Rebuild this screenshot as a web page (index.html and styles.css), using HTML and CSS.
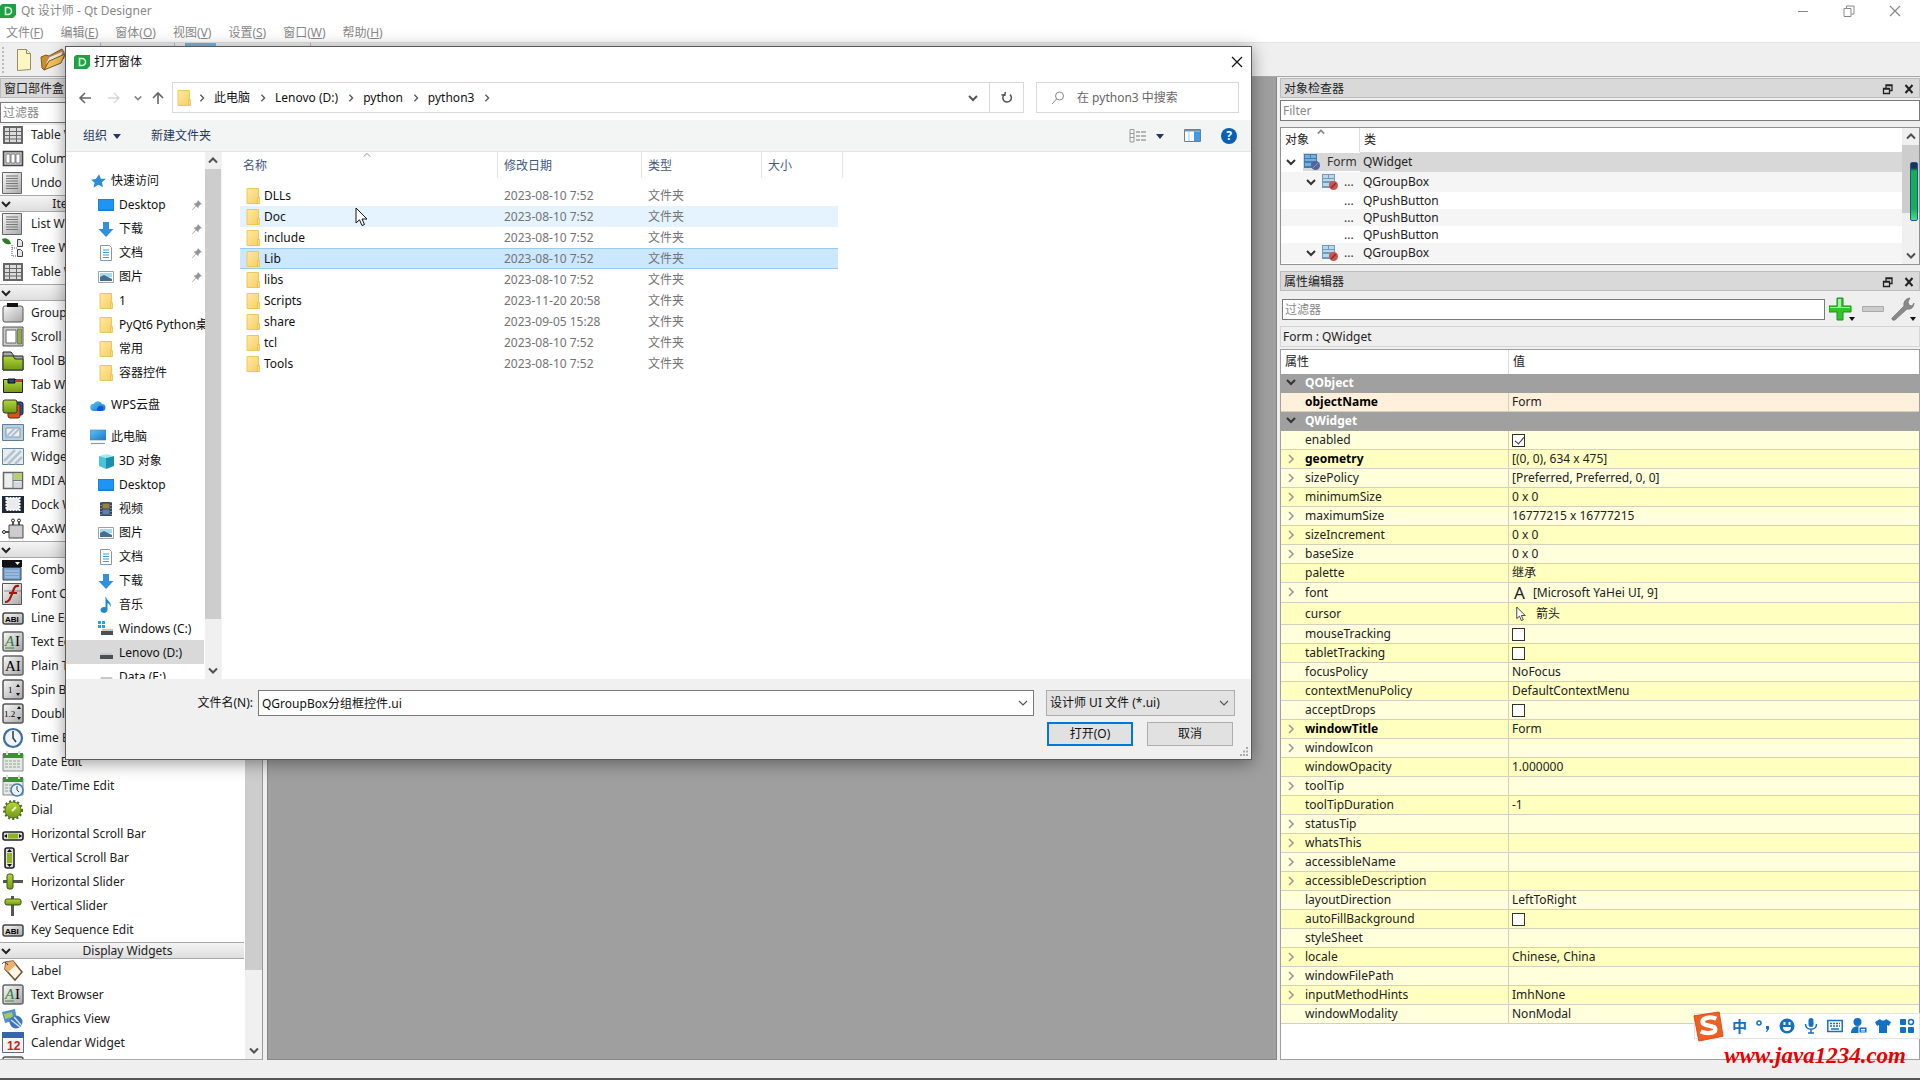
FILE: index.html
```html
<!DOCTYPE html>
<html lang="zh-CN">
<head>
<meta charset="utf-8">
<title>Qt 设计师 - Qt Designer</title>
<link rel="stylesheet" href="styles.css">
</head>
<body>
<svg class="defs" aria-hidden="true">
<defs>
<linearGradient id="gGrey" x1="0" y1="0" x2="1" y2="1"><stop offset="0" stop-color="#f8f8f8"/><stop offset="1" stop-color="#a8a8a8"/></linearGradient>
<linearGradient id="gBlue" x1="0" y1="0" x2="1" y2="1"><stop offset="0" stop-color="#5cc3f7"/><stop offset="1" stop-color="#1877c9"/></linearGradient>
<linearGradient id="gGreen" x1="0" y1="0" x2="0" y2="1"><stop offset="0" stop-color="#b4d63c"/><stop offset="1" stop-color="#6f9a12"/></linearGradient>
<linearGradient id="gFolder" x1="0" y1="0" x2="1" y2="1"><stop offset="0" stop-color="#ffe9a0"/><stop offset="1" stop-color="#f7cf66"/></linearGradient>
<symbol id="down" viewBox="0 0 10 10"><path d="M1 3l4 4 4-4" fill="none" stroke="currentColor" stroke-width="2"/></symbol>
<symbol id="thin" viewBox="0 0 10 10"><path d="M1 3l4 4 4-4" fill="none" stroke="currentColor" stroke-width="1.200"/></symbol>
<symbol id="up" viewBox="0 0 10 10"><path d="M1 7l4-4 4 4" fill="none" stroke="currentColor" stroke-width="2"/></symbol>
<symbol id="right" viewBox="0 0 10 10"><path d="M3 1l4 4-4 4" fill="none" stroke="currentColor" stroke-width="1.6"/></symbol>
<symbol id="tri" viewBox="0 0 8 8"><path d="M0 2h8L4 7z" fill="currentColor"/></symbol>
<symbol id="cross" viewBox="0 0 12 12"><path d="M1 1l10 10M11 1L1 11" fill="none" stroke="currentColor" stroke-width="1.2"/></symbol>
<symbol id="crossb" viewBox="0 0 12 12"><path d="M2.500 2l7 8M9.500 2l-7 8" fill="none" stroke="currentColor" stroke-width="2"/></symbol>
<symbol id="restore" viewBox="0 0 12 12"><path d="M1 3.500h7v8H1zM3.500 3V1h7.500v8H8.500" fill="none" stroke="currentColor"/></symbol>
<symbol id="float" viewBox="0 0 12 12"><path d="M1.500 5.500h6v5h-6zM4 5V2h6v5.500H8M1 6h7M4 2.500h6" fill="none" stroke="currentColor" stroke-width="1.300"/></symbol>
<symbol id="qt" viewBox="0 0 16 16"><path d="M2 1h14v11l-3 3H0V3z" fill="#1ea043"/><path d="M5.500 4.500h2.500a3.400 3.400 0 010 7H5.500z" fill="none" stroke="#d8ffe2" stroke-width="1.600"/></symbol>
<symbol id="folder" viewBox="0 0 14 16"><path d="M1 .5h11.500v15H1z" fill="url(#gFolder)" stroke="#ecc75e"/><path d="M11.500 9.500h2v6h-2z" fill="#fbdc7c" stroke="#e5b94a" stroke-width=".7"/></symbol>
<symbol id="star" viewBox="0 0 14 14"><path d="M8 1l1.500 4L14 5l-3.600 3 1 4.500L7.500 10.300 3 13l1-4.500L1 6l4-.7z" fill="#2f8ad8"/></symbol>
<symbol id="desk" viewBox="0 0 16 16"><path d="M0 2h16v12H0z" fill="#1583e0"/><path d="M1 3h14v9H1z" fill="#1e95f2"/></symbol>
<symbol id="dl" viewBox="0 0 16 16"><path d="M5 1h6v7h4.500L8 16 .5 8H5z" fill="#2f8fe0"/></symbol>
<symbol id="doc" viewBox="0 0 16 16"><path d="M2.500.5h9l2 2v13h-11z" fill="#fff" stroke="#8b98a3"/><path d="M5 5h6M5 7.500h6M5 10h6M5 12.500h6" stroke="#3f9bd8" stroke-width="1.200"/></symbol>
<symbol id="pic" viewBox="0 0 16 16"><path d="M.5 2.500h15v11H.5z" fill="#fff" stroke="#9aa4ab"/><path d="M2 4h12v4H2z" fill="#a8d8f2"/><path d="M2 8l4-2 8 4v2H2z" fill="#41708e"/></symbol>
<symbol id="pin" viewBox="0 0 12 12"><path d="M7 0l5 5-2 .5-2 2L7.500 10 5 7.500.5 12 0 11.500 4.500 7 2 4.500 4.500 4l2-2z" fill="#8f969c"/></symbol>
<symbol id="cloud" viewBox="0 0 16 16"><path d="M4 14a3.600 3.600 0 01-.3-7.200A4.500 4.500 0 0112 7a3.500 3.500 0 010 7z" fill="url(#gBlue)"/><path d="M7 14a4 4 0 015-5 3 3 0 010 5z" fill="#0b58d2"/></symbol>
<symbol id="pc" viewBox="0 0 16 16"><path d="M0 1h16v10H0z" fill="url(#gBlue)" stroke="#3c86b5" stroke-width=".6"/><path d="M1 14.500h14" stroke="#8b9aa5" stroke-width="1.200"/></symbol>
<symbol id="cube" viewBox="0 0 16 16"><path d="M1 3l8-2 6 2-7 2z" fill="#9fe9f3"/><path d="M1 3l7 2v11l-7-3z" fill="#48c4d9"/><path d="M8 5l8-2v10l-8 3z" fill="#1a8fb5"/></symbol>
<symbol id="film" viewBox="0 0 16 16"><path d="M2 1h12v14H2z" fill="#39455f"/><path d="M4.500 2.500h7v5h-7z" fill="#96833f"/><path d="M4.500 8.500h7v5h-7z" fill="#5c81b0"/><path d="M3 1v14M13 1v14" stroke="#bac6d2" stroke-dasharray="1 2"/></symbol>
<symbol id="note" viewBox="0 0 16 16"><path d="M8 0c1 4 6 5 4.500 10-1-3-2-4-3-4v7a3.500 3 0 11-2-2.800V0z" fill="#2485cf"/></symbol>
<symbol id="win" viewBox="0 0 16 16"><path d="M0 0h3v3H0zM4 0h3v3H4zM0 4h3v3H0zM4 4h3v3H4z" fill="#25a5e8"/><path d="M4 8h11v4H3z" fill="#c5c9cb"/><path d="M3 10h12v4H3z" fill="#4a4f53"/></symbol>
<symbol id="drive" viewBox="0 0 16 16"><path d="M3 8h11l1 3H2z" fill="#c5c9cb"/><path d="M2 10h13v4H2z" fill="#4a4f53"/></symbol>
<symbol id="pointer" viewBox="0 0 13 20"><path d="M1 1v15l3.500-3.200L7 18.500l2.500-1L7 12h5z" fill="#fff" stroke="#111"/></symbol>
<symbol id="wTable" viewBox="0 0 22 22"><path d="M1 2h20v18H1z" fill="#666"/><path d="M3 4h4v3H3zM8 4h6v3H8zM15 4h4v3h-4zM3 8h4v3H3zM8 8h6v3H8zM15 8h4v3h-4zM3 12h4v2.500H3zM8 12h6v2.500H8zM15 12h4v2.500h-4zM3 15.500h4V18H3zM8 15.500h6V18H8zM15 15.500h4V18h-4z" fill="#dcdcdc"/></symbol>
<symbol id="wColumn" viewBox="0 0 22 22"><path d="M1.500 3.500h19v14h-19z" fill="#ccc" stroke="#444" stroke-width="1.600"/><path d="M4 6h4v9H4zM9 6h4v9H9zM14 6h4v9h-4z" fill="#fff" stroke="#666" stroke-width=".8"/></symbol>
<symbol id="wList" viewBox="0 0 22 22"><path d="M.5.5h19v21H.5z" fill="url(#gGrey)" stroke="#666"/><path d="M4 4h12M4 6.500h12M4 9h12M4 11.500h12M4 14h12M4 16.500h12" stroke="#777"/></symbol>
<symbol id="wTree" viewBox="0 0 22 22"><path d="M0 2c4-2 8 0 9 5C4 8 1 6 0 2z" fill="#2e7d25"/><path d="M10 8v11h5M10 11h5" stroke="#555" stroke-dasharray="1 1" fill="none"/><path d="M15.500 2.500h3l2 2v5h-5zM15.500 12.500h3l2 2v5h-5z" fill="#e4e4e4" stroke="#444"/></symbol>
<symbol id="wGroup" viewBox="0 0 22 22"><rect x="1" y="4" width="20" height="16" rx="2" fill="url(#gGrey)" stroke="#555"/><path d="M5 1h11v4H5z" fill="#111"/></symbol>
<symbol id="wScroll" viewBox="0 0 22 22"><path d="M1 1h20v19H1z" fill="#ccc" stroke="#555"/><path d="M4 4h10v13H4z" fill="#fff" stroke="#666"/><path d="M15.500 3h4v15h-4z" fill="#8fae3c" stroke="#555" stroke-width=".6"/></symbol>
<symbol id="wTool" viewBox="0 0 22 22"><path d="M1 2h8l3 4h9v14H1z" fill="#aaa" stroke="#222"/><path d="M1 6h10l2 3h8v11H1z" fill="url(#gGreen)" stroke="#233"/></symbol>
<symbol id="wTab" viewBox="0 0 22 22"><path d="M1.500 5.500h19v13h-19z" fill="url(#gGreen)" stroke="#222"/><path d="M6 5h7v4H6z" fill="#248" stroke="#111"/><path d="M14 5h6v3h-6z" fill="#c33"/></symbol>
<symbol id="wStack" viewBox="0 0 22 22"><rect x="9" y="4" width="12" height="13" rx="2" fill="#2450a0" stroke="#124"/><rect x="6" y="6" width="12" height="14" rx="2" fill="#d2571c" stroke="#621"/><rect x="1" y="2" width="14" height="13" rx="2" fill="url(#gGreen)" stroke="#333"/></symbol>
<symbol id="wFrame" viewBox="0 0 22 22"><path d="M.5 2.500h21v16H.5z" fill="#b8d0e2" stroke="#5c7d96"/><path d="M4 6h14v9H4z" fill="#f0f0ee" stroke="#7f9db5"/><path d="M5 14l8-8M9 15l8-8" stroke="#aec0cd" stroke-width="2"/></symbol>
<symbol id="wWidget" viewBox="0 0 22 22"><path d="M.5 2.500h21v16H.5z" fill="#e9ecee" stroke="#62849c"/><path d="M2 15L13 4M6 18L19 5M13 18l7-7" stroke="#b4c4cf" stroke-width="2.500"/></symbol>
<symbol id="wMdi" viewBox="0 0 22 22"><path d="M1.500 2.500h19v16h-19z" fill="#eee" stroke="#666" stroke-width="1.500"/><path d="M12 3h8v7h-8z" fill="#b5cf72"/><path d="M11 3v15M11 10.500h9" stroke="#777"/><path d="M12 12h7v5h-7z" fill="#cfdae6"/></symbol>
<symbol id="wDock" viewBox="0 0 22 22"><path d="M0 2h22v17H0z" fill="#1c2835"/><path d="M4.500 4h13v12h-13z" fill="#e8ecef" stroke="#fff" stroke-width="2" stroke-dasharray="2 1"/></symbol>
<symbol id="wQax" viewBox="0 0 22 22"><path d="M7 7h14v13H7z" fill="#ccc" stroke="#444"/><path d="M11 7V3M17 7V3M7 14H3" stroke="#222" stroke-width="1.500"/><circle cx="11" cy="2.500" r="1.500" fill="#fff" stroke="#222"/><circle cx="17" cy="2.500" r="1.500" fill="#fff" stroke="#222"/><circle cx="2" cy="14" r="1.500" fill="#fff" stroke="#222"/></symbol>
<symbol id="wCombo" viewBox="0 0 22 22"><path d="M0 1h20v7H0z" fill="#111"/><path d="M13 3h5l-2.500 3z" fill="#fff"/><path d="M1 8.500h18V21H1z" fill="#7ba2cd" stroke="#345"/><path d="M3 12h14M3 15h14M3 18h14" stroke="#b8d0ea"/></symbol>
<symbol id="wFont" viewBox="0 0 22 22"><path d="M.5.5h19v21H.5z" fill="url(#gGrey)" stroke="#555"/><path d="M2 8h17" stroke="#888"/><path d="M17 3c-5-1-5 3-7 8s-3 8-7 8M7 10h8" stroke="#a31712" stroke-width="2.200" fill="none"/></symbol>
<symbol id="wAbi" viewBox="0 0 22 22"><rect x="1" y="6" width="20" height="11" rx="2" fill="url(#gGrey)" stroke="#444" stroke-width="1.500"/><text x="3" y="15" class="t8">ABI</text></symbol>
<symbol id="wText" viewBox="0 0 22 22"><rect x="1" y="1" width="20" height="19" rx="2" fill="url(#gGrey)" stroke="#666" stroke-width="1.500"/><text x="3" y="15" class="tA green">A</text><text x="13" y="15" class="tA">I</text><path d="M3 17h9" stroke="#3b8b3e"/></symbol>
<symbol id="wPlain" viewBox="0 0 22 22"><rect x="1" y="1" width="20" height="19" rx="2" fill="url(#gGrey)" stroke="#666" stroke-width="1.500"/><text x="3" y="16" class="tA">AI</text></symbol>
<symbol id="wSpin" viewBox="0 0 22 22"><rect x="1" y="1" width="20" height="19" rx="2" fill="url(#gGrey)" stroke="#555" stroke-width="1.500"/><text x="6" y="14" class="t9">1</text><path d="M14 8l2-3 2 3zM14 14l2 3 2-3z" fill="#111"/></symbol>
<symbol id="wDouble" viewBox="0 0 22 22"><rect x="1" y="1" width="20" height="19" rx="2" fill="url(#gGrey)" stroke="#555" stroke-width="1.500"/><text x="2" y="14" class="t9">1.2</text><path d="M15 6l2-3 2 3zM15 14l2 3 2-3z" fill="#111"/></symbol>
<symbol id="wTime" viewBox="0 0 22 22"><circle cx="11" cy="11" r="9" fill="#eef4fa" stroke="#3e6f9e" stroke-width="2.200"/><path d="M11 4v7l3 4" stroke="#345" stroke-width="1.600" fill="none"/></symbol>
<symbol id="wDate" viewBox="0 0 22 22"><path d="M1 3h20v17H1z" fill="#e6e8e4" stroke="#889"/><path d="M1 2h20v5H1z" fill="#3c9130"/><path d="M5 0v4M17 0v4" stroke="#cfe3c8" stroke-width="2"/><path d="M3 10h16M3 13h16M3 16h16" stroke="#8da58c" stroke-dasharray="3 1"/></symbol>
<symbol id="wDateTime" viewBox="0 0 22 22"><use href="#wDate"/><circle cx="15" cy="15" r="6" fill="#e6f0f9" stroke="#4679a8" stroke-width="1.500"/><path d="M15 11v4l2 2" stroke="#345" fill="none"/></symbol>
<symbol id="wDial" viewBox="0 0 22 22"><circle cx="11" cy="11" r="8.500" fill="none" stroke="#4d6a1d" stroke-width="3" stroke-dasharray="2 2"/><circle cx="11" cy="11" r="8" fill="url(#gGreen)" stroke="#57761c"/><path d="M10 12l4-4" stroke="#eef8c0" stroke-width="2"/></symbol>
<symbol id="wHsb" viewBox="0 0 22 22"><rect x="1" y="9" width="20" height="8" rx="2" fill="#ddd" stroke="#222" stroke-width="1.600"/><path d="M6 10.500h10v5H6z" fill="#8fb51c"/><path d="M5 11v4l-3-2zM17 11v4l3-2z" fill="#111"/></symbol>
<symbol id="wVsb" viewBox="0 0 22 22"><rect x="3" y="1" width="9" height="20" rx="2" fill="#ddd" stroke="#222" stroke-width="1.600"/><path d="M5 6h5v10H5z" fill="#8fb51c"/><path d="M5 5h5L7.500 2zM5 17h5l-2.500 3z" fill="#111"/></symbol>
<symbol id="wHsl" viewBox="0 0 22 22"><path d="M1 10.500h20" stroke="#555" stroke-width="3"/><rect x="5" y="3" width="6" height="15" rx="2" fill="url(#gGreen)" stroke="#3e5510"/></symbol>
<symbol id="wVsl" viewBox="0 0 22 22"><path d="M10.500 1v20" stroke="#555" stroke-width="3"/><rect x="3" y="4" width="16" height="6" rx="2" fill="url(#gGreen)" stroke="#3e5510"/></symbol>
<symbol id="wLabel" viewBox="0 0 22 22"><path d="M4 2l7-1 9 11-7 8L3 9z" fill="#fff7ea" stroke="#754f2d" stroke-width="1.500"/><path d="M4 2l7-1 3 4-8 7-3-3z" fill="#efb06d"/><path d="M0 4c2-3 4-2 6 1" stroke="#333" fill="none"/></symbol>
<symbol id="wGfx" viewBox="0 0 22 22"><path d="M0 4l13-3 2 11-12 3z" fill="#5290c6"/><path d="M2 6l8-2 1 5-8 2z" fill="#9fc96a"/><circle cx="14" cy="14" r="6.500" fill="#3c74c0"/><path d="M9 12l9 7M12 9l7 8" stroke="#d3e4f6" stroke-width="1.500"/></symbol>
<symbol id="wCal" viewBox="0 0 22 22"><path d="M.5.5h21v20H.5z" fill="#f3f3f3" stroke="#667"/><path d="M0 0h22v6H0z" fill="#3565a8"/><text x="5" y="18" class="tCal">12</text></symbol>
<symbol id="form" viewBox="0 0 18 18"><path d="M1 1h13v14H1z" fill="#3f7fb5"/><path d="M2 2h5v3H2zM8 2h5v3H8zM2 6h11v2H2zM2 10h6v3H2z" fill="#78aedb"/><circle cx="12.500" cy="12.500" r="4.500" fill="#51659a"/><path d="M10 15l5-5" stroke="#8895c0"/></symbol>
<symbol id="layout" viewBox="0 0 18 18"><path d="M1 1h13v14H1z" fill="#6f9dc2"/><path d="M2 2h5v3H2zM8 2h5v3H8zM2 6h11v2H2zM2 10h6v3H2z" fill="#bcd5e8"/><circle cx="12.500" cy="12.500" r="4.500" fill="#c9554d"/><path d="M10 15l5-5" stroke="#8c2d2d" stroke-width="1.500"/></symbol>
</defs>
</svg>

<div class="window">
  <header class="titlebar">
    <svg class="i16"><use href="#qt"/></svg>
    <h1>Qt 设计师 - Qt Designer</h1>
    <div class="winbtns">
      <button aria-label="最小化"><svg class="i12" viewBox="0 0 12 12"><path d="M1 6.500h10" stroke="currentColor"/></svg></button>
      <button aria-label="还原"><svg class="i12"><use href="#restore"/></svg></button>
      <button aria-label="关闭"><svg class="i12"><use href="#cross"/></svg></button>
    </div>
  </header>
  <nav class="menubar">
    <button>文件(<u>F</u>)</button><button>编辑(<u>E</u>)</button><button>窗体(<u>O</u>)</button><button>视图(<u>V</u>)</button><button>设置(<u>S</u>)</button><button>窗口(<u>W</u>)</button><button>帮助(<u>H</u>)</button>
  </nav>
  <div class="toolbar">
    <span class="grip"></span>
    <button aria-label="新建"><svg width="16" height="24" viewBox="0 0 16 24"><path d="M1.500 1.500h9l4 4v16l-13 1z" fill="#fbf6c4" stroke="#9a8d5c"/><path d="M10.500 1.500v4h4" fill="#fff" stroke="#9a8d5c"/></svg></button>
    <button aria-label="打开"><svg width="26" height="24" viewBox="0 0 26 24"><path d="M1 9l5-2 3 1L22 1l2 3v6L4 22l-2-2z" fill="#c98f2a" stroke="#7e5a18"/><path d="M6 15L9 9l14-6-2 7L7 19z" fill="#f4eedd" stroke="#a88"/><path d="M4 22l5-9 16-7-4 9z" fill="#f0c05a" stroke="#7e5a18"/></svg></button>
    <span class="sep s1"></span><span class="sep s2"></span><span class="mode"></span><span class="sep s3"></span>
  </div>

  <div class="work">
    <section class="dock widgetbox">
      <h2 class="docktitle">窗口部件盒</h2>
      <input class="field" type="text" placeholder="过滤器" aria-label="过滤器">
      <div class="boxlist">
        <div class="widgets">
          <ul class="pull">
            <li><svg><use href="#wTable"/></svg>Table View</li>
            <li><svg><use href="#wColumn"/></svg>Column View</li>
            <li><svg><use href="#wList"/></svg>Undo View</li>
          </ul>
          <h3><svg><use href="#down"/></svg><span>Item Widgets (Item-Based)</span></h3>
          <ul>
            <li><svg><use href="#wList"/></svg>List Widget</li>
            <li><svg><use href="#wTree"/></svg>Tree Widget</li>
            <li><svg><use href="#wTable"/></svg>Table Widget</li>
          </ul>
          <h3><svg><use href="#down"/></svg><span>Containers</span></h3>
          <ul>
            <li><svg><use href="#wGroup"/></svg>Group Box</li>
            <li><svg><use href="#wScroll"/></svg>Scroll Area</li>
            <li><svg><use href="#wTool"/></svg>Tool Box</li>
            <li><svg><use href="#wTab"/></svg>Tab Widget</li>
            <li><svg><use href="#wStack"/></svg>Stacked Widget</li>
            <li><svg><use href="#wFrame"/></svg>Frame</li>
            <li><svg><use href="#wWidget"/></svg>Widget</li>
            <li><svg><use href="#wMdi"/></svg>MDI Area</li>
            <li><svg><use href="#wDock"/></svg>Dock Widget</li>
            <li><svg><use href="#wQax"/></svg>QAxWidget</li>
          </ul>
          <h3><svg><use href="#down"/></svg><span>Input Widgets</span></h3>
          <ul>
            <li><svg><use href="#wCombo"/></svg>Combo Box</li>
            <li><svg><use href="#wFont"/></svg>Font Combo Box</li>
            <li><svg><use href="#wAbi"/></svg>Line Edit</li>
            <li><svg><use href="#wText"/></svg>Text Edit</li>
            <li><svg><use href="#wPlain"/></svg>Plain Text Edit</li>
            <li><svg><use href="#wSpin"/></svg>Spin Box</li>
            <li><svg><use href="#wDouble"/></svg>Double Spin Box</li>
            <li><svg><use href="#wTime"/></svg>Time Edit</li>
            <li><svg><use href="#wDate"/></svg>Date Edit</li>
            <li><svg><use href="#wDateTime"/></svg>Date/Time Edit</li>
            <li><svg><use href="#wDial"/></svg>Dial</li>
            <li><svg><use href="#wHsb"/></svg>Horizontal Scroll Bar</li>
            <li><svg><use href="#wVsb"/></svg>Vertical Scroll Bar</li>
            <li><svg><use href="#wHsl"/></svg>Horizontal Slider</li>
            <li><svg><use href="#wVsl"/></svg>Vertical Slider</li>
            <li><svg><use href="#wAbi"/></svg>Key Sequence Edit</li>
          </ul>
          <h3><svg><use href="#down"/></svg><span>Display Widgets</span></h3>
          <ul>
            <li><svg><use href="#wLabel"/></svg>Label</li>
            <li><svg><use href="#wText"/></svg>Text Browser</li>
            <li><svg><use href="#wGfx"/></svg>Graphics View</li>
            <li><svg><use href="#wCal"/></svg>Calendar Widget</li>
            <li><svg><use href="#wSpin"/></svg></li>
          </ul>
        </div>
        <div class="scroll"><svg><use href="#up"/></svg><i class="t-box"></i><b></b><svg><use href="#down"/></svg></div>
      </div>
    </section>

    <main class="mdi"></main>

    <aside class="right">
      <section class="dock inspector">
        <h2 class="docktitle">对象检查器<span><svg class="i12"><use href="#float"/></svg><svg class="i12"><use href="#crossb"/></svg></span></h2>
        <input class="field" type="text" placeholder="Filter" aria-label="Filter">
        <div class="treebox">
          <table class="tree">
            <thead><tr><th><svg class="sort"><use href="#up"/></svg>对象</th><th>类</th></tr></thead>
            <tbody>
              <tr class="lv1 sel"><td><span><svg class="i10"><use href="#down"/></svg><em><svg class="i18"><use href="#form"/></svg>Form</em></span></td><td>QWidget</td></tr>
              <tr class="lv2 alt"><td><span><svg class="i10"><use href="#down"/></svg><svg class="i18"><use href="#layout"/></svg>...</span></td><td>QGroupBox</td></tr>
              <tr class="lv3"><td><span>...</span></td><td>QPushButton</td></tr>
              <tr class="lv3 alt"><td><span>...</span></td><td>QPushButton</td></tr>
              <tr class="lv3"><td><span>...</span></td><td>QPushButton</td></tr>
              <tr class="lv2 alt"><td><span><svg class="i10"><use href="#down"/></svg><svg class="i18"><use href="#layout"/></svg>...</span></td><td>QGroupBox</td></tr>
            </tbody>
          </table>
          <div class="scroll"><svg><use href="#up"/></svg><i class="t-tree"></i><b></b><svg><use href="#down"/></svg></div>
          <div class="meter"></div>
        </div>
      </section>

      <section class="dock props">
        <h2 class="docktitle">属性编辑器<span><svg class="i12"><use href="#float"/></svg><svg class="i12"><use href="#crossb"/></svg></span></h2>
        <div class="propbar">
          <input class="field" type="text" placeholder="过滤器" aria-label="属性过滤器">
          <button aria-label="添加动态属性"><svg width="26" height="24" viewBox="0 0 26 24"><path d="M8 1h6v8h8v6h-8v8H8v-8H0V9h8z" fill="#2fc52b" stroke="#1d8f1d"/><path d="M9 2h3v8H9zM1 10h20v1H1z" fill="#a9efa3"/><path d="M20 20h6l-3 4z" fill="#111"/></svg></button>
          <button aria-label="删除动态属性"><svg width="22" height="24" viewBox="0 0 22 24"><path d="M.5 9.500h21v5H.5z" fill="#ccc" stroke="#aaa"/></svg></button>
          <button aria-label="配置"><svg width="25" height="24" viewBox="0 0 25 24"><path d="M1 21L13 9c-1-4 2-8 6-8l-2 4 1 3 3 1 2-3c0 4-3 7-7 6L4 23c-2 1-4-1-3-2z" fill="#8a8a8a" stroke="#666" stroke-width=".6"/><path d="M19 20h6l-3 4z" fill="#111"/></svg></button>
        </div>
        <p class="target">Form : QWidget</p>
        <div class="tablebox">
        <table class="ptable">
          <thead><tr><th>属性</th><th>值</th></tr></thead>
          <tbody>
            <tr class="group"><th colspan="2"><svg><use href="#down"/></svg>QObject</th></tr>
            <tr class="name bold"><td>objectName</td><td>Form</td></tr>
            <tr class="group"><th colspan="2"><svg><use href="#down"/></svg>QWidget</th></tr>
            <tr><td><label for="c1">enabled</label></td><td><input type="checkbox" id="c1" checked></td></tr>
            <tr class="bold"><td><svg><use href="#right"/></svg>geometry</td><td>[(0, 0), 634 x 475]</td></tr>
            <tr><td><svg><use href="#right"/></svg>sizePolicy</td><td>[Preferred, Preferred, 0, 0]</td></tr>
            <tr><td><svg><use href="#right"/></svg>minimumSize</td><td>0 x 0</td></tr>
            <tr><td><svg><use href="#right"/></svg>maximumSize</td><td>16777215 x 16777215</td></tr>
            <tr><td><svg><use href="#right"/></svg>sizeIncrement</td><td>0 x 0</td></tr>
            <tr><td><svg><use href="#right"/></svg>baseSize</td><td>0 x 0</td></tr>
            <tr><td>palette</td><td>继承</td></tr>
            <tr class="h20"><td><svg><use href="#right"/></svg>font</td><td><span class="val"><b>A</b>[Microsoft YaHei UI, 9]</span></td></tr>
            <tr class="h22"><td>cursor</td><td><span class="val"><svg class="cur"><use href="#pointer"/></svg>箭头</span></td></tr>
            <tr><td><label for="c2">mouseTracking</label></td><td><input type="checkbox" id="c2"></td></tr>
            <tr><td><label for="c3">tabletTracking</label></td><td><input type="checkbox" id="c3"></td></tr>
            <tr><td>focusPolicy</td><td>NoFocus</td></tr>
            <tr><td>contextMenuPolicy</td><td>DefaultContextMenu</td></tr>
            <tr><td><label for="c4">acceptDrops</label></td><td><input type="checkbox" id="c4"></td></tr>
            <tr class="bold"><td><svg><use href="#right"/></svg>windowTitle</td><td>Form</td></tr>
            <tr><td><svg><use href="#right"/></svg>windowIcon</td><td></td></tr>
            <tr><td>windowOpacity</td><td>1.000000</td></tr>
            <tr><td><svg><use href="#right"/></svg>toolTip</td><td></td></tr>
            <tr><td>toolTipDuration</td><td>-1</td></tr>
            <tr><td><svg><use href="#right"/></svg>statusTip</td><td></td></tr>
            <tr><td><svg><use href="#right"/></svg>whatsThis</td><td></td></tr>
            <tr><td><svg><use href="#right"/></svg>accessibleName</td><td></td></tr>
            <tr><td><svg><use href="#right"/></svg>accessibleDescription</td><td></td></tr>
            <tr><td>layoutDirection</td><td>LeftToRight</td></tr>
            <tr><td><label for="c5">autoFillBackground</label></td><td><input type="checkbox" id="c5"></td></tr>
            <tr><td>styleSheet</td><td></td></tr>
            <tr><td><svg><use href="#right"/></svg>locale</td><td>Chinese, China</td></tr>
            <tr><td><svg><use href="#right"/></svg>windowFilePath</td><td></td></tr>
            <tr><td><svg><use href="#right"/></svg>inputMethodHints</td><td>ImhNone</td></tr>
            <tr><td>windowModality</td><td>NonModal</td></tr>
          </tbody>
        </table>
        </div>
      </section>
    </aside>
  </div>
  <footer class="statusbar"></footer>
</div>

<div class="dialog" role="dialog" aria-labelledby="dlgTitle">
  <div class="dlghead">
    <svg class="i16"><use href="#qt"/></svg><h2 id="dlgTitle">打开窗体</h2>
    <button aria-label="关闭"><svg class="i12"><use href="#cross"/></svg></button>
  </div>
  <div class="addr">
    <div class="history">
      <button aria-label="后退"><svg width="14" height="12" viewBox="0 0 14 12"><path d="M13 6H2M7 1L2 6l5 5" fill="none" stroke="#666" stroke-width="1.600"/></svg></button>
      <button aria-label="前进"><svg width="14" height="12" viewBox="0 0 14 12"><path d="M1 6h11M7 1l5 5-5 5" fill="none" stroke="#d5d5d5" stroke-width="1.300"/></svg></button>
      <button aria-label="最近位置"><svg class="i8"><use href="#down"/></svg></button>
      <button aria-label="上一级"><svg width="12" height="14" viewBox="0 0 12 14"><path d="M6 13V2M1 7l5-5 5 5" fill="none" stroke="#666" stroke-width="1.600"/></svg></button>
    </div>
    <div class="crumbs">
      <svg class="fold"><use href="#folder"/></svg>
      <svg class="i8"><use href="#right"/></svg><a href="#">此电脑</a>
      <svg class="i8"><use href="#right"/></svg><a href="#">Lenovo (D:)</a>
      <svg class="i8"><use href="#right"/></svg><a href="#">python</a>
      <svg class="i8"><use href="#right"/></svg><a href="#">python3</a>
      <svg class="i8"><use href="#right"/></svg>
      <button class="drop" aria-label="展开"><svg class="i10"><use href="#down"/></svg></button>
      <button class="reload" aria-label="刷新"><svg width="12" height="12" viewBox="0 0 12 12"><path d="M8.500 2.200A4.300 4.300 0 113 2.800M3.500 0v3.500H0" transform="rotate(8 6 6)" fill="none" stroke="#555" stroke-width="1.500"/></svg></button>
    </div>
    <label class="search"><svg width="14" height="14" viewBox="0 0 14 14"><circle cx="8.500" cy="5" r="4" fill="none" stroke="#888"/><path d="M5.500 8L1 13" stroke="#888"/></svg><input type="search" placeholder="在 python3 中搜索" aria-label="搜索"></label>
  </div>
  <div class="cmds">
    <button>组织<svg class="i8"><use href="#tri"/></svg></button>
    <button>新建文件夹</button>
    <div class="views">
      <button aria-label="更改视图"><svg width="18" height="14" viewBox="0 0 18 14"><path d="M1 .5h4v12.500H1zM1 4.500h4M1 8.500h4" fill="none" stroke="#999"/><path d="M7 3h4M12 3h5M7 7h4M12 7h5M7 11h4M12 11h5" stroke="#777"/></svg><svg class="i8"><use href="#tri"/></svg></button>
      <button aria-label="预览窗格"><svg width="17" height="13" viewBox="0 0 17 13"><path d="M.5.5h16v12H.5z" fill="#fff" stroke="#6b7f90"/><path d="M1 1h15v1.500H1z" fill="#7d93a5"/><path d="M10 2.500h6V12h-6z" fill="#3f9be8"/><path d="M5 3v9" stroke="#9ec9ec"/></svg></button>
      <button aria-label="帮助" class="help">?</button>
    </div>
  </div>
  <div class="body">
    <nav class="places">
      <ul>
        <li class="top"><svg><use href="#star"/></svg>快速访问</li>
        <li><svg><use href="#desk"/></svg>Desktop<svg class="pin"><use href="#pin"/></svg></li>
        <li><svg><use href="#dl"/></svg>下载<svg class="pin"><use href="#pin"/></svg></li>
        <li><svg><use href="#doc"/></svg>文档<svg class="pin"><use href="#pin"/></svg></li>
        <li><svg><use href="#pic"/></svg>图片<svg class="pin"><use href="#pin"/></svg></li>
        <li><svg><use href="#folder"/></svg>1</li>
        <li><svg><use href="#folder"/></svg>PyQt6 Python桌面</li>
        <li><svg><use href="#folder"/></svg>常用</li>
        <li><svg><use href="#folder"/></svg>容器控件</li>
      </ul>
      <ul><li class="top"><svg><use href="#cloud"/></svg>WPS云盘</li></ul>
      <ul>
        <li class="top"><svg><use href="#pc"/></svg>此电脑</li>
        <li><svg><use href="#cube"/></svg>3D 对象</li>
        <li><svg><use href="#desk"/></svg>Desktop</li>
        <li><svg><use href="#film"/></svg>视频</li>
        <li><svg><use href="#pic"/></svg>图片</li>
        <li><svg><use href="#doc"/></svg>文档</li>
        <li><svg><use href="#dl"/></svg>下载</li>
        <li><svg><use href="#note"/></svg>音乐</li>
        <li><svg><use href="#win"/></svg>Windows (C:)</li>
        <li class="sel"><svg><use href="#drive"/></svg>Lenovo (D:)</li>
        <li><svg><use href="#drive"/></svg>Data (E:)</li>
      </ul>
    </nav>
    <div class="scroll"><svg><use href="#up"/></svg><i class="t-nav"></i><b></b><svg><use href="#down"/></svg></div>
    <div class="files">
      <table>
        <colgroup><col class="c1"><col class="c2"><col class="c3"><col class="c4"><col class="c5"></colgroup>
        <thead><tr><th><svg class="sort"><use href="#thin"/></svg>名称</th><th>修改日期</th><th>类型</th><th>大小</th><th></th></tr></thead>
        <tbody>
          <tr><td><span><svg><use href="#folder"/></svg>DLLs</span></td><td>2023-08-10 7:52</td><td>文件夹</td><td></td></tr>
          <tr class="hover"><td><span><svg><use href="#folder"/></svg>Doc</span></td><td>2023-08-10 7:52</td><td>文件夹</td><td></td></tr>
          <tr><td><span><svg><use href="#folder"/></svg>include</span></td><td>2023-08-10 7:52</td><td>文件夹</td><td></td></tr>
          <tr class="sel"><td><span><svg><use href="#folder"/></svg>Lib</span></td><td>2023-08-10 7:52</td><td>文件夹</td><td></td></tr>
          <tr><td><span><svg><use href="#folder"/></svg>libs</span></td><td>2023-08-10 7:52</td><td>文件夹</td><td></td></tr>
          <tr><td><span><svg><use href="#folder"/></svg>Scripts</span></td><td>2023-11-20 20:58</td><td>文件夹</td><td></td></tr>
          <tr><td><span><svg><use href="#folder"/></svg>share</span></td><td>2023-09-05 15:28</td><td>文件夹</td><td></td></tr>
          <tr><td><span><svg><use href="#folder"/></svg>tcl</span></td><td>2023-08-10 7:52</td><td>文件夹</td><td></td></tr>
          <tr><td><span><svg><use href="#folder"/></svg>Tools</span></td><td>2023-08-10 7:52</td><td>文件夹</td><td></td></tr>
        </tbody>
      </table>
    </div>
  </div>
  <form class="dlgfoot">
    <div class="row">
      <label for="fname">文件名(N):</label>
      <span class="combo name"><input id="fname" type="text" value="QGroupBox分组框控件.ui"><svg class="i10"><use href="#thin"/></svg></span>
      <span class="combo type"><select aria-label="文件类型"><option>设计师 UI 文件 (*.ui)</option></select><svg class="i10"><use href="#thin"/></svg></span>
    </div>
    <div class="row actions">
      <button type="button" class="primary">打开(O)</button>
      <button type="button">取消</button>
    </div>
    <svg class="resize" viewBox="0 0 10 10"><path d="M7 1h2M4 4.500h2M7 4.500h2M1 8h2M4 8h2M7 8h2" stroke="#aaa" stroke-width="2"/></svg>
  </form>
  <svg class="mouse"><use href="#pointer"/></svg>
</div>

<div class="ime">
  <svg class="logo" viewBox="0 0 32 32"><path d="M1 5L27 1l4 25L6 31z" fill="#ee5f22" stroke="#d94f18"/><path d="M24 8c-6-3-15-1-14 4 1 4 13 2 13 7 0 4-9 5-15 2" fill="none" stroke="#fff" stroke-width="4.500"/></svg>
  <b>中</b>
  <svg viewBox="0 0 16 16"><circle cx="4" cy="5" r="2" fill="none" stroke="currentColor" stroke-width="1.500"/><path d="M11 8h3v3l-2 3h-1l1-3h-1z" fill="currentColor"/></svg>
  <svg viewBox="0 0 16 16"><circle cx="8" cy="8" r="7.500" fill="currentColor"/><path d="M4 9h8a4 4 0 01-8 0zM4.500 4h2v3h-2zM9.500 4h2v3h-2z" fill="#fff"/></svg>
  <svg viewBox="0 0 16 16"><rect x="5.500" y="0" width="5" height="9" rx="2.500" fill="currentColor"/><path d="M2.500 6c0 7 11 7 11 0M8 11v4M5 15h6" fill="none" stroke="currentColor" stroke-width="1.500"/></svg>
  <svg viewBox="0 0 16 16"><path d="M.8 2.500h14.400v11H.8z" fill="none" stroke="currentColor" stroke-width="1.500"/><path d="M3 5.500h10M3 8h10" stroke="currentColor" stroke-width="1.500" stroke-dasharray="2 1"/><path d="M4 11h8" stroke="currentColor" stroke-width="1.500"/></svg>
  <svg viewBox="0 0 16 16"><circle cx="6.500" cy="4" r="4" fill="currentColor"/><path d="M0 15c0-8 10-8 11-4v4z" fill="currentColor"/><path d="M8 9h8v6H8z" fill="currentColor" stroke="#fff"/><path d="M10 11.500h4M10 13h4" stroke="#fff"/></svg>
  <svg viewBox="0 0 16 16"><path d="M5 1c1 2 5 2 6 0l5 3-2 4-2-1v8H4V7L2 8 0 4z" fill="currentColor"/></svg>
  <svg viewBox="0 0 16 16"><rect x="1" y="1" width="6" height="6" rx="1" fill="currentColor"/><circle cx="12" cy="4" r="2.500" fill="none" stroke="currentColor" stroke-width="1.500"/><rect x="1" y="9" width="6" height="6" rx="1" fill="currentColor"/><rect x="9" y="9" width="6" height="6" rx="1" fill="currentColor"/></svg>
</div>
<p class="site">www.java1234.com</p>
</body>
</html>
```
FILE: styles.css
```css
* { box-sizing: border-box; }
body, h1, h2, h3, p, ul { margin: 0; padding: 0; }
body {
  height: 100vh;
  overflow: hidden;
  position: relative;
  background: #efefef;
  color: #222;
  font: 12px/18px "Noto Sans", "Noto Sans CJK SC", sans-serif;
}
ul { list-style: none; }
h1, h2, h3 { font-size: 12px; font-weight: 400; }
svg { display: block; flex: none; }
button, input, select { font: inherit; color: inherit; margin: 0; }
button { background: none; border: 0; padding: 0; }
input::placeholder { color: #888; opacity: 1; }
table { border-spacing: 0; table-layout: fixed; width: 100%; }
th, td { padding: 0; text-align: left; font-weight: 400; white-space: nowrap; overflow: hidden; }
.defs { position: absolute; width: 0; height: 0; }
.i8 { width: 8px; height: 8px; }
.i10 { width: 10px; height: 10px; }
.i12 { width: 12px; height: 12px; }
.i16 { width: 16px; height: 16px; }
.i18 { width: 18px; height: 18px; }
.t8 { font: bold 8px "Liberation Sans", sans-serif; }
.t9 { font: 9px "Liberation Serif", serif; }
.tA { font: 15px "Liberation Serif", serif; }
.tCal { font: bold 12px "Liberation Sans", sans-serif; fill: #c8221c; }
.green { fill: #2f7d3a; font-style: italic; }

/* main window */
.window { height: 100%; display: flex; flex-direction: column; }
.titlebar { display: flex; align-items: center; height: 21px; background: #fff; color: #888; }
.titlebar h1 { margin-left: 5px; }
.winbtns { margin-left: auto; display: flex; gap: 34px; padding-right: 19px; }
.menubar { display: flex; gap: 17px; height: 22px; padding: 2px 0 0 6px; background: #fff; color: #888; border-bottom: 1px solid #e4e4e4; }
.toolbar { display: flex; align-items: center; height: 33px; }
.toolbar .grip { width: 3px; height: 26px; margin: 0 11px 0 2px; border-left: 2px dotted #bbb; }
.toolbar button + button { margin-left: 8px; }
.sep { align-self: stretch; width: 1px; background: #bbb; }
.s1 { margin-left: 34px; }
.s2 { margin: 0 10px 0 73px; }
.mode { width: 31px; align-self: stretch; background: #7fb2dd; }
.s3 { margin-left: 94px; }
.work { flex: 1; min-height: 0; display: flex; border-top: 1px solid #a8a8a8; }
.statusbar { height: 20px; border-bottom: 2px solid #555; }
.mdi { flex: 1; margin-left: 4px; background: #9f9f9f; border: 1px solid #868686; border-top: 0; }
.docktitle { display: flex; align-items: center; height: 20px; padding: 1px 4px 0 3px; background: #d9d9d9; border: 1px solid #bcbcbc; }
.docktitle span { margin-left: auto; display: flex; gap: 9px; }
.field { display: block; height: 21px; width: 100%; padding: 0 2px; border: 1px solid #7a7a7a; background: #fff; outline: 0; }
.scroll { width: 17px; flex: none; background: #f0f0f0; display: flex; flex-direction: column; align-items: center; color: #505050; }
.scroll svg { width: 10px; height: 17px; }
.scroll i { width: 100%; background: #cdcdcd; }
.scroll b { flex: 1; }

/* widget box */
.widgetbox { width: 263px; padding-top: 1px; display: flex; flex-direction: column; border-right: 1px solid #999; border-bottom: 1px solid #aaa; }
.widgetbox .field { margin: 4px 0 2px; }
.boxlist { flex: 1; min-height: 0; display: flex; background: #fff; }
.widgets { flex: 1; overflow: hidden; }
.widgets .pull { margin-top: -2px; }
.widgets li { display: flex; align-items: center; gap: 7px; height: 24px; padding-left: 2px; }
.widgets li svg { width: 22px; height: 22px; }
.widgets h3 { display: flex; align-items: center; height: 17px; margin-right: 1px; padding-left: 1px; background: linear-gradient(#f4f4f4, #dedede); border: solid #a8a8a8; border-width: 1px 0; }
.widgets h3 svg { width: 10px; height: 10px; }
.widgets h3 span { flex: 1; text-align: center; }
.t-box { height: 828px; }

/* right docks */
.right { width: 643px; padding: 1px 0 0 3px; display: flex; flex-direction: column; background: #efefef; }
.inspector .field { margin: 2px 0 6px; }
.treebox { position: relative; display: flex; height: 138px; background: #fff; border: 1px solid #909090; }
.tree { flex: 1; align-self: flex-start; }
.tree th { height: 24px; position: relative; padding-left: 4px; }
.tree th:first-child { width: 79px; border-right: 1px solid #ddd; }
.sort { position: absolute; color: #888; width: 10px; height: 8px; }
.tree .sort { left: 35px; top: 0; }
.tree td { height: 20px; padding-left: 3px; }
.tree td span, .tree em { display: flex; align-items: center; font-style: normal; }
.tree .lv3 td { height: 17px; line-height: 17px; }
.tree .alt td { background: #f5f5f5; }
.tree td:first-child { color: #333; }
.lv1 span { gap: 7px; padding-left: 2px; }
.lv1 em { flex: 1; gap: 6px; }
.lv2 span { gap: 5px; padding-left: 22px; }
.lv3 span { padding-left: 60px; }
.tree .sel em, .tree .sel td + td { background: #d8d8d8; }
.t-tree { height: 68px; }
.meter { position: absolute; right: 1px; top: 34px; width: 8px; height: 59px; border: 1px solid #1556a8; border-radius: 2px; background: linear-gradient(#1d3350 5px, #16b04e 8px 80%, #52e070); }
.props { flex: 1; min-height: 0; margin-top: 6px; display: flex; flex-direction: column; }
.propbar { display: flex; align-items: center; gap: 7px; margin: 6px 4px 5px 2px; }
.propbar .field { flex: 1; margin-right: -3px; }
.target { height: 21px; padding-left: 2px; border: 1px solid #d5d5d5; line-height: 20px; }
.tablebox { flex: 1; margin-top: 2px; overflow: hidden; background: #fff; border: 1px solid #a0a0a0; }
.ptable th { height: 24px; padding-left: 4px; }
.ptable thead th:first-child { width: 228px; border-right: 1px solid #ddd; }
.ptable td { height: 19px; border-bottom: 1px solid #d3d1bd; line-height: 18px; padding-left: 3px; }
.ptable td:first-child { padding-left: 24px; border-right: 1px solid #d3d1bd; position: relative; }
.ptable td > svg, .group svg { position: absolute; left: 5px; top: 4px; width: 10px; height: 10px; color: #999; }
.ptable tr:nth-child(even) td { background: #ffffdc; }
.ptable tr:nth-child(odd) td { background: #ffffbf; }
.ptable tr.name td { background: #fff0dc; }
.ptable .group th { position: relative; height: 19px; line-height: 17px; padding: 0 0 2px 24px; background: #a0a0a0; color: #fff; font-weight: 700; }
.ptable .group svg { color: #333; top: 3px; }
.bold td:first-child { font-weight: 700; color: #000; }
.ptable .h20 td { height: 20px; }
.ptable .h22 td { height: 22px; }
.val { display: flex; align-items: center; gap: 8px; }
.val b { font-size: 17px; font-weight: 400; padding-left: 2px; }
.cur { width: 10px; height: 16px; margin: 0 2px 0 4px; }
input[type="checkbox"] { appearance: none; display: block; width: 13px; height: 13px; border: 1px solid #333; background: #fff; }
input[type="checkbox"]:checked::before { content: ""; display: block; width: 4px; height: 8px; margin: 0 0 0 4px; border: solid #333; border-width: 0 1px 1px 0; transform: rotate(40deg); }

/* open dialog */
.dialog { position: absolute; left: 65px; top: 46px; width: 1187px; height: 714px; display: flex; flex-direction: column; background: #fff; border: 1px solid #5a5a5a; box-shadow: 0 3px 16px rgba(0, 0, 0, .4); color: #111; }
.dlghead { display: flex; align-items: center; height: 28px; padding: 1px 8px 0; }
.dlghead h2 { margin-left: 4px; }
.dlghead button { margin-left: auto; }
.addr { display: flex; height: 31px; margin: 7px 12px 7px 0; }
.history { display: flex; align-items: center; width: 106px; padding-left: 12px; gap: 15px; color: #888; }
.history button:nth-child(3) { margin: 0 -5px 0 -2px; }
.crumbs { flex: 1; display: flex; align-items: center; padding-left: 4px; border: 1px solid #d9d9d9; }
.crumbs a { color: inherit; text-decoration: none; margin: 0 9px 0 8px; }
.crumbs > .i8 { color: #555; }
.fold { width: 14px; height: 16px; margin-right: 7px; }
.drop { margin-left: auto; width: 33px; color: #555; }
.crumbs button { display: grid; place-items: center; height: 100%; }
.reload { width: 34px; border-left: 1px solid #d9d9d9; }
.search { width: 203px; margin-left: 12px; padding-left: 14px; display: flex; align-items: center; gap: 12px; border: 1px solid #d9d9d9; }
.search input { width: 100%; min-width: 0; border: 0; padding: 0; outline: 0; background: none; }
.search input::placeholder { color: #666; }
.cmds { display: flex; align-items: center; height: 32px; padding: 0 14px 0 17px; gap: 30px; background: #f3f4f4; border-bottom: 1px solid #e5e5e5; color: #1e395b; }
.cmds button { display: flex; align-items: center; gap: 6px; }
.views { margin-left: auto; display: flex; align-items: center; gap: 20px; }
.views button:first-child { gap: 9px; }
.cmds .help { width: 16px; height: 16px; justify-content: center; border-radius: 50%; background: #0a60b8; color: #fff; font-weight: 700; line-height: 16px; }
.body { flex: 1; min-height: 0; display: flex; }
.places { width: 139px; padding-top: 16px; overflow: hidden; }
.places ul + ul { margin-top: 8px; }
.places li { position: relative; display: flex; align-items: center; gap: 5px; height: 24px; padding: 1px 0 0 32px; white-space: nowrap; overflow: hidden; }
.places li.top { padding-left: 24px; }
.places li svg { width: 16px; height: 16px; }
.places li .pin { width: 10px; height: 10px; margin: 0 3px 0 auto; }
.places .sel { background: #d9d9d9; margin-right: 1px; }
.body > .scroll { width: 16px; }
.t-nav { height: 450px; }
.files { flex: 1; padding-left: 18px; border-left: 1px solid #f3f3f3; }
.files table { width: 603px; }
.c1 { width: 258px; }
.c2 { width: 144px; }
.c3 { width: 120px; }
.c4 { width: 76px; }
.c5 { width: 5px; }
.files th { position: relative; height: 26px; padding: 2px 0 0 6px; color: #44597a; border-right: 1px solid #e5e5e5; }
.files th:first-child { padding-left: 3px; }
.files th:nth-child(4) { border: 0; }
.files .sort { left: 122px; top: -1px; transform: rotate(180deg); }
.files tbody::before { content: ""; display: block; height: 7px; }
.files td { height: 21px; padding-left: 6px; color: #737373; line-height: 19px; }
.files td:first-child { color: #111; }
.files td span { display: flex; align-items: center; gap: 4px; }
.files td svg { width: 14px; height: 16px; }
.files .hover td { background: #e5f3ff; }
.files .sel td { background: #cce8ff; border: solid #99cbee; border-width: 1px 0; }
.dlgfoot { position: relative; height: 80px; padding: 11px 16px 0 0; background: #f0f0f0; }
.row { display: flex; align-items: center; justify-content: flex-end; }
.row > label { width: 187px; margin-right: 5px; text-align: right; }
.combo { display: flex; align-items: center; height: 26px; padding-right: 5px; color: #555; border: 1px solid #7a7a7a; background: #fff; }
.combo input, .combo select { flex: 1; min-width: 0; height: 24px; border: 0; padding: 0 3px; outline: 0; color: #111; background: none; appearance: none; }
.combo.name { flex: 1; }
.combo.type { width: 189px; margin-left: 12px; background: #e2e2e2; border-color: #adadad; }
.actions { gap: 14px; padding: 6px 2px 0 0; }
.actions button { width: 86px; height: 24px; background: #e1e1e1; border: 1px solid #adadad; }
.actions .primary { border: 2px solid #0078d7; }
.resize { position: absolute; right: 2px; bottom: 2px; width: 10px; height: 10px; }
.mouse { position: absolute; left: 289px; top: 160px; width: 13px; height: 20px; }

/* input method bar and site mark */
.ime { position: absolute; right: 0; bottom: 41px; height: 26px; display: flex; align-items: center; gap: 8px; padding-right: 4px; background: #fff; border: 1px solid #e4e4e4; color: #1470c4; }
.ime svg { width: 16px; height: 16px; }
.ime b { font-size: 15px; }
.ime .logo { width: 31px; height: 31px; margin-left: -2px; }
.site { position: absolute; right: 14px; bottom: 11px; color: #e80000; font: italic bold 23px/26px "Liberation Serif", serif; }
```
